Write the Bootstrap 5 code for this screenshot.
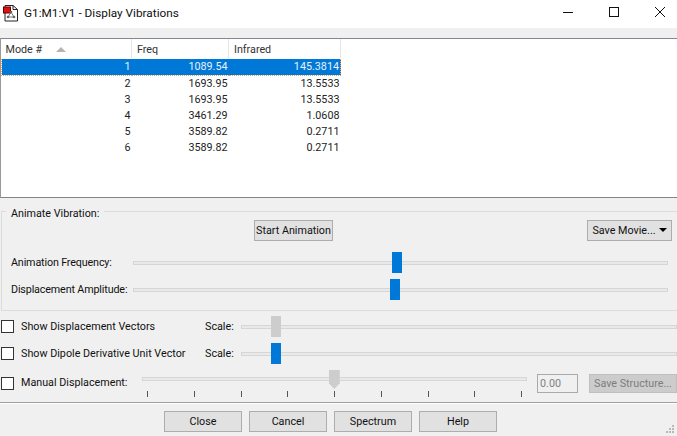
<!DOCTYPE html>
<html lang="en">
<head>
<meta charset="UTF-8">
<title>G1:M1:V1 - Display Vibrations</title>
<link href="https://cdn.jsdelivr.net/npm/bootstrap@5.3.0/dist/css/bootstrap.min.css" rel="stylesheet">
<style>
    body {
        width: 677px;
        height: 436px;
        overflow: hidden;
        background-color: #f0f0f0;
        color: #111;
        font-family: Roboto, "Liberation Sans", sans-serif;
        font-size: 10.75px;
        line-height: 16px;
    }
    .title-bar { height: 28px; background-color: #fff; padding: 0 0 3px 3px; }
    .title-text { margin-left: 5px; font-size: 11.8px; color: #111; }
    .win-controls { margin-right: -6px; margin-top: -1px; }
    .win-btn { width: 46px; height: 24px; }
    .band { height: 10px; }

    .mode-grid { height: 160px; background-color: #fff; border-top: 1px solid #848890; border-left: 1px solid #9a9a9a; border-bottom: 1px solid #848484; }
    .mode-table { width: 339px; table-layout: fixed; margin: 0; color: #222; --bs-table-bg: transparent; }
    .mode-table th, .mode-table td { padding: 0 1px 0 0; border: 0; font-weight: 400; font-size: 10.75px; line-height: 16px; text-align: right; box-shadow: none; }
    .mode-table th { height: 19px; text-align: left; padding-left: 5px; border-right: 1px solid #e5e5e5; border-bottom: 1px solid #fff; color: #333; }
    .mode-table th:first-child { padding-left: 4px; }
    .mode-table tr.selected td { background-color: #0078d7; color: #e8f2fb; border-top: 1px dotted #f3a14a; border-bottom: 1px dotted #f3a14a; }
    .mode-table tr.selected td:first-child { border-left: 1px dotted #f3a14a; }
    .mode-table tr.selected td:last-child { border-right: 1px dotted #f3a14a; }
    .sort-arrow { display: inline-block; margin-left: 14px; border-left: 5px solid transparent; border-right: 5px solid transparent; border-bottom: 5px solid #b5b5b5; vertical-align: 1px; }

    .animate-box { position: relative; margin: 13px 0 0 1px; height: 100px; border-top: 1px solid #dcdcdc; border-left: 1px solid #dcdcdc; border-bottom: 1px solid #dcdcdc; }
    .box-legend { position: absolute; top: -6px; left: 4px; padding: 0 5px; background-color: #f0f0f0; }
    .win-button { height: 21px; padding: 0; font-size: 10.75px; line-height: 17px; white-space: nowrap; color: #111; background-color: #e1e1e1; border: 1px solid #adadad; border-radius: 0; }
    .win-button:hover { background-color: #e1e1e1; border-color: #adadad; color: #111; }
    .start-row { padding-top: 8px; padding-right: 5px; }
    .start-btn { width: 79px; margin-left: 252px; }
    .movie-btn { width: 85px; margin-left: auto; }
    .movie-caret { display: inline-block; margin-left: 3px; border-left: 4px solid transparent; border-right: 4px solid transparent; border-top: 4px solid #000; vertical-align: 2px; }

    .slide-row { height: 21px; }
    .freq-row { margin-top: 11px; }
    .amp-row { margin-top: 6px; }
    .slide-label { width: 131px; padding-left: 9px; flex: none; white-space: nowrap; letter-spacing: -0.15px; }
    .track { position: relative; height: 4px; flex: 1 1 auto; background-color: #e7eaea; border: 1px solid #d6d6d6; }
    .freq-row .track, .amp-row .track { margin-right: 9px; }
    .thumb { position: absolute; top: -10px; width: 10px; height: 21px; background-color: #0078d7; }
    .thumb.off { background-color: #cdcdcd; }
    .thumb.pointer { top: -8px; width: 11px; height: 19px; background-color: #cdcdcd; clip-path: polygon(0 0, 100% 0, 100% 70%, 50% 100%, 0 70%); }

    .option-row { height: 21px; margin-top: 6px; }
    .option-row.first { margin-top: 5px; }
    .form-check-input.win-check { width: 13px; height: 13px; margin: 0 7px 0 1px; flex: none; border: 1px solid #333; border-radius: 0; background-color: #fff; }
    .option-label { width: 184px; flex: none; white-space: nowrap; }
    .scale-label { width: 36px; flex: none; }
    .manual-row { height: 33px; margin-top: 6px; }
    .form-check-input.win-check.manual-check { margin-bottom: 6px; }
    .manual-label { width: 121px; flex: none; margin-bottom: 7px; white-space: nowrap; }
    .manual-slider { width: 385px; flex: none; position: relative; margin-bottom: 15px; }
    .manual-slider .track { height: 4px; }
    .ticks { position: absolute; top: 14px; left: 5px; right: 5px; display: flex; justify-content: space-between; }
    .ticks i { display: block; width: 1px; height: 6px; background-color: #555; }
    .value-box { width: 41px; height: 19px; margin: 0 11px 7px 10px; padding: 0 2px; font-size: 10.75px; line-height: 17px; color: #808080; background-color: #f0f0f0; border: 1px solid #aaa; border-radius: 0; }
    .value-box:disabled { background-color: #f0f0f0; }
    .save-btn { width: 88px; height: 19px; margin-bottom: 7px; line-height: 15px; color: #7d7d7d; background-color: #ccc; border-color: #bfbfbf; }
    .save-btn:disabled { color: #7d7d7d; background-color: #ccc; border-color: #bfbfbf; opacity: 1; }

    .foot-bar { position: relative; height: 34px; margin-top: -1px; border-top: 1px solid #a0a0a0; box-shadow: inset 0 1px 0 #fff; padding-top: 8px; gap: 7px; padding-left: 164px; }
    .foot-btn { width: 78px; }
    .grip { position: absolute; right: 2px; bottom: 2px; }
</style>
</head>
<body>

<div class="title-bar d-flex align-items-center">
    <svg width="16" height="18" viewBox="0 0 16 18">
        <path d="M2 1.5H10L14.5 5.5V17H2Z" fill="#fff" stroke="#222"/>
        <path d="M10 1.5V5.5H14.5" fill="none" stroke="#222"/>
        <rect x="0.5" y="3" width="7" height="6" fill="#e01010" stroke="#600"/>
        <path d="M8 8L5 13M8 8L11 13M5 13H11" stroke="#777" fill="none"/>
        <circle cx="8" cy="8" r="1.3" fill="#666"/>
        <circle cx="5" cy="13" r="1.3" fill="#666"/>
        <circle cx="11" cy="13" r="1.3" fill="#666"/>
    </svg>
    <span class="title-text">G1:M1:V1 - Display Vibrations</span>
    <div class="win-controls d-flex ms-auto">
        <div class="win-btn d-flex align-items-center justify-content-center">
            <svg width="10" height="10" viewBox="0 0 10 10"><path d="M0 5.5H10" stroke="#111"/></svg>
        </div>
        <div class="win-btn d-flex align-items-center justify-content-center">
            <svg width="10" height="10" viewBox="0 0 10 10"><rect x="0.5" y="0.5" width="9" height="9" fill="none" stroke="#111"/></svg>
        </div>
        <div class="win-btn d-flex align-items-center justify-content-center">
            <svg width="10" height="10" viewBox="0 0 10 10"><path d="M0 0L10 10M10 0L0 10" stroke="#111"/></svg>
        </div>
    </div>
</div>
<div class="band"></div>

<div class="mode-grid">
    <table class="table mode-table">
        <colgroup><col style="width:130px"><col style="width:97px"><col style="width:112px"></colgroup>
        <thead>
            <tr><th>Mode #<span class="sort-arrow"></span></th><th>Freq</th><th>Infrared</th></tr>
        </thead>
        <tbody>
            <tr class="selected"><td>1</td><td>1089.54</td><td>145.3814</td></tr>
            <tr><td>2</td><td>1693.95</td><td>13.5533</td></tr>
            <tr><td>3</td><td>1693.95</td><td>13.5533</td></tr>
            <tr><td>4</td><td>3461.29</td><td>1.0608</td></tr>
            <tr><td>5</td><td>3589.82</td><td>0.2711</td></tr>
            <tr><td>6</td><td>3589.82</td><td>0.2711</td></tr>
        </tbody>
    </table>
</div>

<div class="animate-box">
    <span class="box-legend">Animate Vibration:</span>
    <div class="start-row d-flex">
        <button type="button" class="btn win-button start-btn">Start Animation</button>
        <button type="button" class="btn win-button movie-btn">Save Movie...<span class="movie-caret"></span></button>
    </div>
    <div class="slide-row freq-row d-flex align-items-center">
        <span class="slide-label">Animation Frequency:</span>
        <div class="track"><div class="thumb" style="left:48.45%"></div></div>
    </div>
    <div class="slide-row amp-row d-flex align-items-center">
        <span class="slide-label">Displacement Amplitude:</span>
        <div class="track"><div class="thumb" style="left:48.05%"></div></div>
    </div>
</div>

<div class="option-row first d-flex align-items-center">
    <input class="form-check-input win-check" type="checkbox" id="showVectors">
    <label class="option-label" for="showVectors">Show Displacement Vectors</label>
    <span class="scale-label">Scale:</span>
    <div class="track"><div class="thumb off" style="left:6.7%"></div></div>
</div>
<div class="option-row d-flex align-items-center">
    <input class="form-check-input win-check" type="checkbox" id="showDipole">
    <label class="option-label" for="showDipole">Show Dipole Derivative Unit Vector</label>
    <span class="scale-label">Scale:</span>
    <div class="track"><div class="thumb" style="left:6.7%"></div></div>
</div>
<div class="manual-row d-flex align-items-center">
    <input class="form-check-input win-check manual-check" type="checkbox" id="manualDisp">
    <label class="manual-label" for="manualDisp">Manual Displacement:</label>
    <div class="manual-slider">
        <div class="track"><div class="thumb pointer" style="left:48.5%"></div></div>
        <div class="ticks"><i></i><i></i><i></i><i></i><i></i><i></i><i></i><i></i><i></i></div>
    </div>
    <input class="form-control value-box" type="text" value="0.00" disabled>
    <button type="button" class="btn win-button save-btn" disabled>Save Structure...</button>
</div>

<div class="foot-bar d-flex">
    <button type="button" class="btn win-button foot-btn">Close</button>
    <button type="button" class="btn win-button foot-btn">Cancel</button>
    <button type="button" class="btn win-button foot-btn">Spectrum</button>
    <button type="button" class="btn win-button foot-btn">Help</button>
    <svg class="grip" width="10" height="10" viewBox="0 0 10 10" fill="#b8b8b8">
        <rect x="7" y="1" width="2" height="2"/><rect x="4" y="4" width="2" height="2"/><rect x="7" y="4" width="2" height="2"/>
        <rect x="1" y="7" width="2" height="2"/><rect x="4" y="7" width="2" height="2"/><rect x="7" y="7" width="2" height="2"/>
    </svg>
</div>

<script src="https://cdn.jsdelivr.net/npm/bootstrap@5.3.0/dist/js/bootstrap.bundle.min.js"></script>
</body>
</html>
